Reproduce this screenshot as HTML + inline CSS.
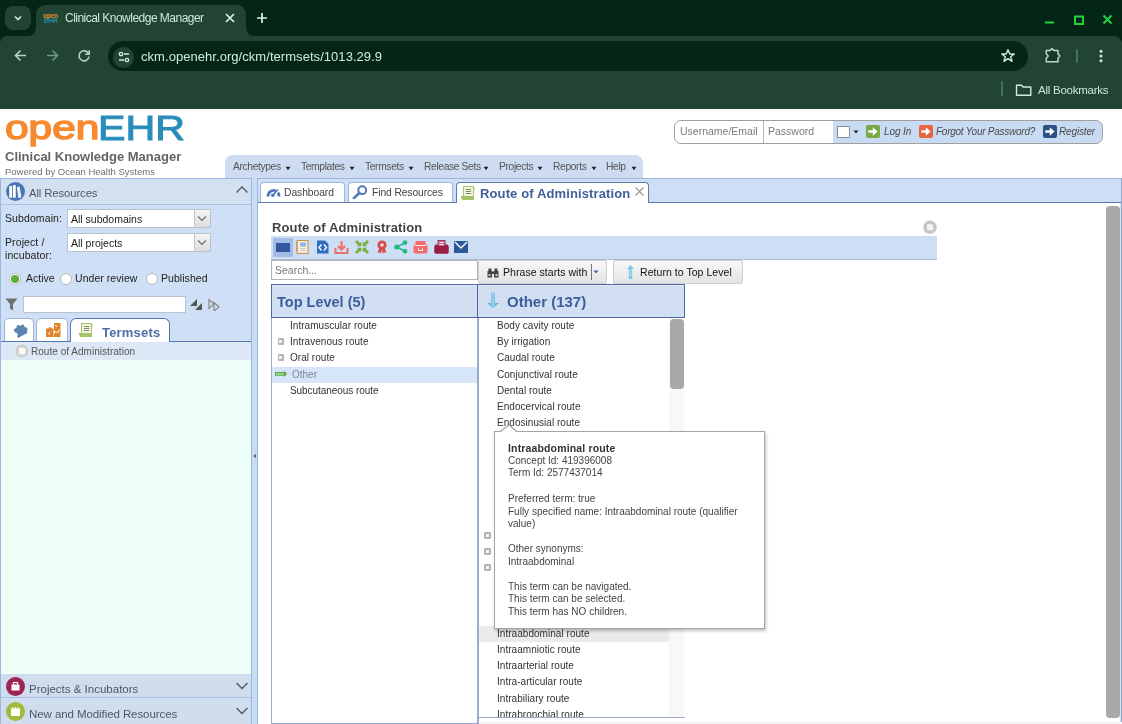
<!DOCTYPE html>
<html><head><meta charset="utf-8">
<style>
*{box-sizing:border-box;margin:0;padding:0}
html,body{width:1122px;height:724px;overflow:hidden;background:#fff;font-family:"Liberation Sans",sans-serif;position:relative}
.a{position:absolute}
.t{white-space:nowrap;will-change:transform}
#tabbar{left:0;top:0;width:1122px;height:60px;background:#042616}
#toolbar{left:0;top:36px;width:1122px;height:73px;background:#214433;border-radius:7px 8px 0 0}
#tab{left:36px;top:5px;width:210px;height:31px;background:#214433;border-radius:9px 9px 0 0}
#omni{left:108px;top:41px;width:920px;height:30px;border-radius:15px;background:#042616}
.ct{color:#cfe6d6;font-size:12.5px;white-space:nowrap;will-change:transform}
</style></head><body>
<div id="tabbar" class="a"></div>
<div id="tab" class="a"></div>
<div class="a" style="left:28px;top:28px;width:8px;height:8px;background:#214433"></div>
<div class="a" style="left:20px;top:20px;width:16px;height:16px;border-radius:0 0 8px 0;background:#042616;left:20px"></div>
<div class="a" style="left:246px;top:28px;width:8px;height:8px;background:#214433"></div>
<div class="a" style="left:246px;top:20px;width:16px;height:16px;border-radius:0 0 0 8px;background:#042616"></div>
<div class="a" style="left:5px;top:6px;width:26px;height:24px;border-radius:8px;background:#214433"></div>
<svg class="a" style="left:13px;top:13px" width="10" height="10" viewBox="0 0 10 10"><path d="M2 3.5 L5 6.5 L8 3.5" stroke="#d6eadb" stroke-width="1.6" fill="none"/></svg>
<div class="a" style="left:43px;top:11.5px;font:bold 6.5px 'Liberation Sans';color:#d8902e;letter-spacing:-0.2px">open</div>
<div class="a" style="left:44px;top:17px;font:bold 6.5px 'Liberation Sans';color:#2a8aa8;letter-spacing:0px">EHR</div>
<div class="a ct" style="left:65px;top:11px;font-size:12px;letter-spacing:-0.52px">Clinical Knowledge Manager</div>
<svg class="a" style="left:224px;top:12px" width="12" height="12" viewBox="0 0 12 12"><path d="M2 2L10 10M10 2L2 10" stroke="#e3f0e6" stroke-width="1.7"/></svg>
<svg class="a" style="left:256px;top:12px" width="12" height="12" viewBox="0 0 12 12"><path d="M6 1V11M1 6H11" stroke="#e3f0e6" stroke-width="1.7"/></svg>
<svg class="a" style="left:1040px;top:10px" width="80" height="18" viewBox="0 0 80 18">
<path d="M5 12.5H14" stroke="#22d13c" stroke-width="2"/>
<rect x="35" y="6.5" width="8" height="7.5" stroke="#22d13c" stroke-width="2" fill="none"/>
<path d="M63.5 5.5L71.5 13.5M71.5 5.5L63.5 13.5" stroke="#22d13c" stroke-width="2"/>
</svg>
<div id="toolbar" class="a"></div>
<div id="omni" class="a"></div>
<svg class="a" style="left:14px;top:49px" width="13" height="13" viewBox="0 0 13 13"><path d="M12 6.5H2M6.5 1.5L1.5 6.5L6.5 11.5" stroke="#b9d6c2" stroke-width="1.6" fill="none"/></svg>
<svg class="a" style="left:46px;top:49px" width="13" height="13" viewBox="0 0 13 13"><path d="M1 6.5H11M6.5 1.5L11.5 6.5L6.5 11.5" stroke="#6f9a7e" stroke-width="1.6" fill="none"/></svg>
<svg class="a" style="left:77px;top:49px" width="14" height="14" viewBox="0 0 14 14"><path d="M11.3 4.2A5 5 0 1 0 12 7.5" stroke="#b9d6c2" stroke-width="1.6" fill="none"/><path d="M12.2 1.2V5.2H8.2" stroke="#b9d6c2" stroke-width="1.6" fill="none"/></svg>
<div class="a" style="left:113px;top:46.5px;width:21px;height:21px;border-radius:50%;background:#214433"></div>
<svg class="a" style="left:116.5px;top:50px" width="14" height="14" viewBox="0 0 14 14"><circle cx="4" cy="4" r="1.7" stroke="#d6eadb" stroke-width="1.3" fill="none"/><path d="M7 4H12" stroke="#d6eadb" stroke-width="1.5"/><circle cx="10" cy="10" r="1.7" stroke="#d6eadb" stroke-width="1.3" fill="none"/><path d="M2 10H7" stroke="#d6eadb" stroke-width="1.5"/></svg>
<div class="a ct" style="left:141px;top:48.8px;font-size:13px;letter-spacing:0.05px;color:#d6ead9">ckm.openehr.org/ckm/termsets/1013.29.9</div>
<svg class="a" style="left:1000px;top:48px" width="16" height="16" viewBox="0 0 16 16"><path d="M8 1.8L9.8 6H14.2L10.7 8.8L12 13.3L8 10.6L4 13.3L5.3 8.8L1.8 6H6.2Z" stroke="#d6eadb" stroke-width="1.4" fill="none" stroke-linejoin="round"/></svg>
<svg class="a" style="left:1044px;top:47px" width="18" height="17" viewBox="0 0 18 17"><path d="M2.3 3.6H5.8L8 1.6L10.2 3.6H14V6.8L15.8 9L14 11.2V14.8H2.3V11.2L4.2 9L2.3 6.8Z" stroke="#b9dcc4" stroke-width="1.5" fill="#173a28" stroke-linejoin="round"/></svg>
<div class="a" style="left:1076px;top:49px;width:1.5px;height:14px;background:#46705a"></div>
<svg class="a" style="left:1097px;top:49px" width="8" height="14" viewBox="0 0 8 14"><circle cx="4" cy="2.2" r="1.5" fill="#d6eadb"/><circle cx="4" cy="7" r="1.5" fill="#d6eadb"/><circle cx="4" cy="11.8" r="1.5" fill="#d6eadb"/></svg>
<div class="a" style="left:1001px;top:81px;width:1.5px;height:15px;background:#46705a"></div>
<svg class="a" style="left:1015px;top:83px" width="18" height="14" viewBox="0 0 18 14"><path d="M1.5 2.2H6.5L8.2 4H15.8V12.3H1.5Z" stroke="#d6eadb" stroke-width="1.4" fill="none" stroke-linejoin="round"/></svg>
<div class="a ct" style="left:1038px;top:84px;font-size:11.5px;letter-spacing:-0.25px">All Bookmarks</div>

<div class="a" style="left:0px;top:109px;width:1122px;height:615px;background:#fff;"></div>
<div class="a t" style="left:4.5px;top:111.27px;font-size:33px;line-height:33px;color:#f7892f;font-weight:normal;font-style:normal;transform:scaleX(1.285);transform-origin:0 0;-webkit-text-stroke:1.4px #f7892f">open</div>
<div class="a t" style="left:97.5px;top:110.75px;font-size:35.5px;line-height:35.5px;color:#2a8cba;font-weight:normal;font-style:normal;transform:scaleX(1.16);transform-origin:0 0;-webkit-text-stroke:1px #2a8cba">EHR</div>
<div class="a t" style="left:5px;top:150.00px;font-size:13px;line-height:13px;color:#646464;font-weight:bold;font-style:normal;">Clinical Knowledge Manager</div>
<div class="a t" style="left:5px;top:166.96px;font-size:9.5px;line-height:9.5px;color:#707070;font-weight:normal;font-style:normal;">Powered by Ocean Health Systems</div>
<div class="a" style="left:674px;top:120px;width:429px;height:24px;background:#c9dbf2;border:1px solid #a0a0a0;border-radius:7px"></div>
<div class="a" style="left:675px;top:121px;width:158px;height:22px;background:#fff;border-radius:6px 0 0 6px"></div>
<div class="a" style="left:763px;top:121px;width:1px;height:22px;background:#b5b5b5;"></div>
<div class="a t" style="left:680px;top:126.11px;font-size:10.5px;line-height:10.5px;color:#7a7a7a;font-weight:normal;font-style:normal;">Username/Email</div>
<div class="a t" style="left:768px;top:126.11px;font-size:10.5px;line-height:10.5px;color:#7a7a7a;font-weight:normal;font-style:normal;">Password</div>
<div class="a" style="left:837px;top:126px;width:13px;height:12px;background:#fff;border:1px solid #8e8e8e"></div>
<svg class="a" style="left:853px;top:129px" width="6" height="6" viewBox="0 0 6 6"><path d="M0.5 1.5H5.5L3 4.5Z" fill="#222"/></svg>
<div class="a" style="left:866px;top:125px;width:14px;height:13px;background:#79a947;border-radius:2px"></div>
<svg class="a" style="left:866px;top:125px" width="14" height="13" viewBox="0 0 14 13"><path d="M2.3 5.2H6.8V2.3L11.6 6.5L6.8 10.7V7.8H2.3Z" fill="#fff"/></svg>
<div class="a t" style="left:883.5px;top:126.53px;font-size:10px;line-height:10px;color:#4a4a4a;font-weight:normal;font-style:italic;letter-spacing:-0.1px">Log In</div>
<div class="a" style="left:919px;top:125px;width:14px;height:13px;background:#e8643c;border-radius:2px"></div>
<svg class="a" style="left:919px;top:125px" width="14" height="13" viewBox="0 0 14 13"><path d="M2.3 5.2H6.8V2.3L11.6 6.5L6.8 10.7V7.8H2.3Z" fill="#fff"/></svg>
<div class="a t" style="left:936px;top:126.53px;font-size:10px;line-height:10px;color:#4a4a4a;font-weight:normal;font-style:italic;letter-spacing:-0.25px">Forgot Your Password?</div>
<div class="a" style="left:1043px;top:125px;width:14px;height:13px;background:#2d4f82;border-radius:2px"></div>
<svg class="a" style="left:1043px;top:125px" width="14" height="13" viewBox="0 0 14 13"><path d="M2.3 5.2H6.8V2.3L11.6 6.5L6.8 10.7V7.8H2.3Z" fill="#fff"/></svg>
<div class="a t" style="left:1059px;top:126.53px;font-size:10px;line-height:10px;color:#4a4a4a;font-weight:normal;font-style:italic;letter-spacing:-0.15px">Register</div>
<div class="a" style="left:225px;top:155px;width:418px;height:30px;background:#cddcf1;border-radius:8px 8px 0 0"></div>
<div class="a t" style="left:233px;top:162.08px;font-size:10.3px;line-height:10.3px;color:#555;font-weight:normal;font-style:normal;letter-spacing:-0.38px">Archetypes</div>
<svg class="a" style="left:285px;top:166px" width="6" height="5" viewBox="0 0 6 5"><path d="M0.6 0.8H5.4L3 4.2Z" fill="#222"/></svg>
<div class="a t" style="left:301px;top:162.08px;font-size:10.3px;line-height:10.3px;color:#555;font-weight:normal;font-style:normal;letter-spacing:-0.38px">Templates</div>
<svg class="a" style="left:349px;top:166px" width="6" height="5" viewBox="0 0 6 5"><path d="M0.6 0.8H5.4L3 4.2Z" fill="#222"/></svg>
<div class="a t" style="left:365px;top:162.08px;font-size:10.3px;line-height:10.3px;color:#555;font-weight:normal;font-style:normal;letter-spacing:-0.38px">Termsets</div>
<svg class="a" style="left:408px;top:166px" width="6" height="5" viewBox="0 0 6 5"><path d="M0.6 0.8H5.4L3 4.2Z" fill="#222"/></svg>
<div class="a t" style="left:424px;top:162.08px;font-size:10.3px;line-height:10.3px;color:#555;font-weight:normal;font-style:normal;letter-spacing:-0.38px">Release Sets</div>
<svg class="a" style="left:483px;top:166px" width="6" height="5" viewBox="0 0 6 5"><path d="M0.6 0.8H5.4L3 4.2Z" fill="#222"/></svg>
<div class="a t" style="left:498.5px;top:162.08px;font-size:10.3px;line-height:10.3px;color:#555;font-weight:normal;font-style:normal;letter-spacing:-0.38px">Projects</div>
<svg class="a" style="left:537px;top:166px" width="6" height="5" viewBox="0 0 6 5"><path d="M0.6 0.8H5.4L3 4.2Z" fill="#222"/></svg>
<div class="a t" style="left:553px;top:162.08px;font-size:10.3px;line-height:10.3px;color:#555;font-weight:normal;font-style:normal;letter-spacing:-0.38px">Reports</div>
<svg class="a" style="left:591px;top:166px" width="6" height="5" viewBox="0 0 6 5"><path d="M0.6 0.8H5.4L3 4.2Z" fill="#222"/></svg>
<div class="a t" style="left:606px;top:162.08px;font-size:10.3px;line-height:10.3px;color:#555;font-weight:normal;font-style:normal;letter-spacing:-0.38px">Help</div>
<svg class="a" style="left:631px;top:166px" width="6" height="5" viewBox="0 0 6 5"><path d="M0.6 0.8H5.4L3 4.2Z" fill="#222"/></svg>
<div class="a" style="left:0px;top:178px;width:252px;height:546px;background:#cfdff5;border:1px solid #99b7df"></div>
<div class="a" style="left:1px;top:179px;width:250px;height:25px;background:#d3e0f1;"></div>
<div class="a" style="left:1px;top:204px;width:250px;height:1px;background:#a7c0e3;"></div>
<svg class="a" style="left:5px;top:181px" width="21" height="21" viewBox="0 0 21 21"><circle cx="10.5" cy="10.5" r="9.5" fill="#4a77b6"/><rect x="4" y="4.8" width="3.3" height="12.2" fill="#fff" stroke="#3d66a3" stroke-width="0.5"/><rect x="7.7" y="3.9" width="3.3" height="13.1" fill="#fff" stroke="#3d66a3" stroke-width="0.5"/><path d="M11.8 6.2L14.6 5.6L16.4 16.6L13.4 17Z" fill="#eef3fb"/></svg>
<div class="a t" style="left:29.2px;top:188.43px;font-size:11.3px;line-height:11.3px;color:#4c5866;font-weight:normal;font-style:normal;letter-spacing:-0.1px">All Resources</div>
<svg class="a" style="left:235px;top:185px" width="14" height="9" viewBox="0 0 14 9"><path d="M1.5 7.5L7 2L12.5 7.5" stroke="#4c5866" stroke-width="1.3" fill="none"/></svg>
<div class="a t" style="left:4.6px;top:212.61px;font-size:10.5px;line-height:10.5px;color:#222;font-weight:normal;font-style:normal;letter-spacing:0.1px">Subdomain:</div>
<div class="a t" style="left:4.6px;top:236.61px;font-size:10.5px;line-height:10.5px;color:#222;font-weight:normal;font-style:normal;letter-spacing:0.1px">Project /</div>
<div class="a t" style="left:4.6px;top:250.11px;font-size:10.5px;line-height:10.5px;color:#222;font-weight:normal;font-style:normal;letter-spacing:0.1px">incubator:</div>
<div class="a" style="left:67px;top:209px;width:144px;height:19px;background:#fff;border:1px solid #b9c3cf"></div>
<div class="a" style="left:194px;top:210px;width:16px;height:17px;background:linear-gradient(#f4f4f4,#dedede);border-left:1px solid #c7c7c7"></div>
<svg class="a" style="left:196px;top:215px" width="12" height="8" viewBox="0 0 12 8"><path d="M2 1.5L6 5.5L10 1.5" stroke="#666" stroke-width="1.1" fill="none"/></svg>
<div class="a t" style="left:71px;top:213.71px;font-size:10.5px;line-height:10.5px;color:#222;font-weight:normal;font-style:normal;">All subdomains</div>
<div class="a" style="left:67px;top:233px;width:144px;height:19px;background:#fff;border:1px solid #b9c3cf"></div>
<div class="a" style="left:194px;top:234px;width:16px;height:17px;background:linear-gradient(#f4f4f4,#dedede);border-left:1px solid #c7c7c7"></div>
<svg class="a" style="left:196px;top:239px" width="12" height="8" viewBox="0 0 12 8"><path d="M2 1.5L6 5.5L10 1.5" stroke="#666" stroke-width="1.1" fill="none"/></svg>
<div class="a t" style="left:71px;top:237.71px;font-size:10.5px;line-height:10.5px;color:#222;font-weight:normal;font-style:normal;">All projects</div>
<div class="a" style="left:8.5px;top:272.5px;width:12px;height:12px;border-radius:50%;background:#fff;border:1px solid #b9b9b9"></div>
<div class="a" style="left:10.5px;top:274.5px;width:8px;height:8px;border-radius:50%;background:#5aad3f"></div>
<div class="a t" style="left:26px;top:273.11px;font-size:10.5px;line-height:10.5px;color:#222;font-weight:normal;font-style:normal;">Active</div>
<div class="a" style="left:59.5px;top:272.5px;width:12px;height:12px;border-radius:50%;background:#fff;border:1px solid #b9b9b9"></div>
<div class="a t" style="left:75.2px;top:273.11px;font-size:10.5px;line-height:10.5px;color:#222;font-weight:normal;font-style:normal;letter-spacing:0.05px">Under review</div>
<div class="a" style="left:145.5px;top:272.5px;width:12px;height:12px;border-radius:50%;background:#fff;border:1px solid #b9b9b9"></div>
<div class="a t" style="left:161.2px;top:273.11px;font-size:10.5px;line-height:10.5px;color:#222;font-weight:normal;font-style:normal;letter-spacing:0.05px">Published</div>
<svg class="a" style="left:5px;top:298px" width="13" height="13" viewBox="0 0 13 13"><path d="M0.5 0.5H12.5L8 6V12.5L5 10.5V6Z" fill="#707070"/></svg>
<div class="a" style="left:23px;top:296px;width:163px;height:17px;background:#fff;border:1px solid #b9c3cf"></div>
<svg class="a" style="left:189px;top:298px" width="14" height="13" viewBox="0 0 14 13"><path d="M8 1L1 8H8Z" fill="#555"/><path d="M13 5L6 12H13Z" fill="#555"/></svg>
<svg class="a" style="left:208px;top:298px" width="14" height="13" viewBox="0 0 14 13"><path d="M1 1.5L6 6L1 10.5Z" stroke="#888" stroke-width="1.2" fill="none"/><path d="M6 4.5L11 9L6 13Z" stroke="#888" stroke-width="1.2" fill="none"/></svg>
<div class="a" style="left:1px;top:341px;width:250px;height:1px;background:#5478b5;"></div>
<div class="a" style="left:4px;top:318px;width:30px;height:23px;background:#fff;border:1px solid #a2b3d0;border-bottom:none;border-radius:5px 5px 0 0"></div>
<div class="a" style="left:36px;top:318px;width:32px;height:23px;background:#fff;border:1px solid #a2b3d0;border-bottom:none;border-radius:5px 5px 0 0"></div>
<div class="a" style="left:70px;top:318px;width:100px;height:24px;background:#fff;border:1px solid #5478b5;border-bottom:none;border-radius:6px 6px 0 0"></div>
<svg class="a" style="left:11px;top:321px" width="18" height="18" viewBox="0 0 18 18"><g transform="rotate(-28 9 9)"><path d="M3.5 5.5H7.2C6.6 3.2 11.4 3.2 10.8 5.5H14.5V9.2C16.8 8.6 16.8 13.4 14.5 12.8V15H3.5V12.8C5.5 13.4 5.5 8.6 3.5 9.2Z" fill="#5b84b1"/></g></svg>
<svg class="a" style="left:45px;top:322px" width="17" height="16" viewBox="0 0 17 16"><path d="M1 6.5H3.5A1.5 1.5 0 0 1 6.5 6.5H8.5V15H1Z" fill="#e08529"/><path d="M9 1H15.5V15H9V11.5A1.5 1.5 0 0 0 9 8.5Z" fill="#e08529"/><path d="M5 13L3.5 11.5L5 10M11 9.5L12.5 11L14.5 7.5" stroke="#fff" stroke-width="1" fill="none"/><path d="M10.5 3L12 5" stroke="#fff" stroke-width="1"/></svg>
<svg class="a" style="left:79px;top:323px" width="15" height="15" viewBox="0 0 15 15"><rect x="2.5" y="0.5" width="10" height="11" fill="#f3f8e2" stroke="#a9c274" stroke-width="1.1"/><path d="M12.5 0.5L14.3 3H12.5Z" fill="#a9c274"/><path d="M4.8 3.5H10.2M4.8 5.5H10.2M4.8 7.5H10.2" stroke="#6f7f55" stroke-width="0.9"/><path d="M0 10H12.8V14H1.5L0 11.5Z" fill="#a3c468"/></svg>
<div class="a t" style="left:101.8px;top:325.70px;font-size:13px;line-height:13px;color:#4a6ea8;font-weight:bold;font-style:normal;letter-spacing:0.2px">Termsets</div>
<div class="a" style="left:1px;top:342px;width:250px;height:18px;background:#dde8f7;"></div>
<div class="a" style="left:1px;top:360px;width:250px;height:314px;background:#eefff7;"></div>
<svg class="a" style="left:15px;top:344px" width="14" height="14" viewBox="0 0 14 14"><circle cx="7" cy="7" r="6.6" fill="#d0d0d0"/><rect x="3.8" y="3.8" width="6.4" height="6.4" rx="1" fill="#fafafa"/></svg>
<div class="a t" style="left:30.8px;top:346.84px;font-size:10px;line-height:10px;color:#555;font-weight:normal;font-style:normal;letter-spacing:0.03px">Route of Administration</div>
<div class="a" style="left:1px;top:674px;width:250px;height:24px;background:#d0ddee;"></div>
<div class="a" style="left:1px;top:697px;width:250px;height:1px;background:#a7c0e3;"></div>
<div class="a" style="left:1px;top:698px;width:250px;height:26px;background:#d0ddee;"></div>
<div class="a" style="left:6px;top:677px;width:19px;height:19px;border-radius:50%;background:#9c2553"></div>
<svg class="a" style="left:9px;top:680px" width="13" height="13" viewBox="0 0 13 13"><rect x="2.5" y="4.5" width="8" height="6" fill="#fff"/><path d="M4.5 4.5V2.5H8.5V4.5" stroke="#fff" stroke-width="1.2" fill="none"/></svg>
<div class="a t" style="left:29.3px;top:683.77px;font-size:11.5px;line-height:11.5px;color:#4c5866;font-weight:normal;font-style:normal;">Projects &amp; Incubators</div>
<svg class="a" style="left:235px;top:682px" width="14" height="8" viewBox="0 0 14 8"><path d="M1.5 1L7 6.5L12.5 1" stroke="#4c5866" stroke-width="1.3" fill="none"/></svg>
<div class="a" style="left:6px;top:702px;width:19px;height:19px;border-radius:50%;background:#9fbb3b"></div>
<svg class="a" style="left:9px;top:705px" width="13" height="13" viewBox="0 0 13 13"><rect x="2" y="3.5" width="9" height="7.5" fill="#fff"/><path d="M4 2V4M6.5 2V4M9 2V4" stroke="#fff" stroke-width="1"/></svg>
<div class="a t" style="left:29.3px;top:708.57px;font-size:11.5px;line-height:11.5px;color:#4c5866;font-weight:normal;font-style:normal;letter-spacing:-0.08px">New and Modified Resources</div>
<svg class="a" style="left:235px;top:707px" width="14" height="8" viewBox="0 0 14 8"><path d="M1.5 1L7 6.5L12.5 1" stroke="#4c5866" stroke-width="1.3" fill="none"/></svg>
<div class="a" style="left:252px;top:178px;width:6px;height:546px;background:#cadcf3;"></div>
<div class="a" style="left:257px;top:178px;width:1px;height:546px;background:#99b7df;"></div>
<svg class="a" style="left:252px;top:453px" width="5" height="6" viewBox="0 0 5 6"><path d="M4 0.5V5.5L1 3Z" fill="#777"/></svg>
<div class="a" style="left:258px;top:178px;width:864px;height:25px;background:#cedff5;"></div>
<div class="a" style="left:258px;top:178px;width:864px;height:1px;background:#99b7df;"></div>
<div class="a" style="left:258px;top:202px;width:864px;height:1px;background:#5a7bab;"></div>
<div class="a" style="left:1120px;top:203px;width:1px;height:521px;background:#d5e0f0;"></div>
<div class="a" style="left:1121px;top:178px;width:1px;height:546px;background:#8fa9cf;"></div>
<div class="a" style="left:260px;top:182px;width:85px;height:20px;background:#fff;border:1px solid #99b7df;border-bottom:none;border-radius:4px 4px 0 0"></div>
<div class="a" style="left:348px;top:182px;width:105px;height:20px;background:#fff;border:1px solid #99b7df;border-bottom:none;border-radius:4px 4px 0 0"></div>
<div class="a" style="left:456px;top:182px;width:193px;height:21px;background:#fff;border:1px solid #5a7bab;border-bottom:none;border-radius:4px 4px 0 0"></div>
<svg class="a" style="left:266px;top:187px" width="15" height="10" viewBox="0 0 15 10"><path d="M2 9.5A5.8 5.8 0 0 1 9.5 3.7" stroke="#4d78b8" stroke-width="2.8" fill="none"/><path d="M12 5.6A5.8 5.8 0 0 1 13 9.5" stroke="#4d78b8" stroke-width="2.8" fill="none"/><path d="M7 8L11.8 2.6" stroke="#4d78b8" stroke-width="1.7"/><circle cx="6.8" cy="8.2" r="1.8" fill="#4d78b8"/></svg>
<div class="a t" style="left:284px;top:187.58px;font-size:10.3px;line-height:10.3px;color:#444;font-weight:normal;font-style:normal;letter-spacing:-0.05px">Dashboard</div>
<svg class="a" style="left:352px;top:185px" width="16" height="14" viewBox="0 0 16 14"><circle cx="10.2" cy="5.2" r="3.9" stroke="#5079b6" stroke-width="2" fill="none"/><path d="M7.4 8L2 13" stroke="#5079b6" stroke-width="2.6" stroke-linecap="round"/></svg>
<div class="a t" style="left:372px;top:187.58px;font-size:10.3px;line-height:10.3px;color:#444;font-weight:normal;font-style:normal;letter-spacing:-0.1px">Find Resources</div>
<svg class="a" style="left:460.5px;top:185.5px" width="15" height="15" viewBox="0 0 15 15"><rect x="2.5" y="0.5" width="10" height="11" fill="#f3f8e2" stroke="#a9c274" stroke-width="1.1"/><path d="M12.5 0.5L14.3 3H12.5Z" fill="#a9c274"/><path d="M4.8 3.5H10.2M4.8 5.5H10.2M4.8 7.5H10.2" stroke="#6f7f55" stroke-width="0.9"/><path d="M0 10H12.8V14H1.5L0 11.5Z" fill="#a3c468"/></svg>
<div class="a t" style="left:480px;top:186.80px;font-size:13px;line-height:13px;color:#3e5f99;font-weight:bold;font-style:normal;letter-spacing:0.12px">Route of Administration</div>
<svg class="a" style="left:635px;top:187px" width="9" height="9" viewBox="0 0 9 9"><path d="M0.5 0.5L8.5 8.5M8.5 0.5L0.5 8.5" stroke="#999" stroke-width="1.1"/></svg>
<div class="a" style="left:1106px;top:206px;width:14px;height:512px;background:#a8a8a8;border-radius:4px"></div>
<div class="a t" style="left:271.5px;top:220.80px;font-size:13px;line-height:13px;color:#444;font-weight:bold;font-style:normal;letter-spacing:0.12px">Route of Administration</div>
<svg class="a" style="left:923px;top:220px" width="14" height="15" viewBox="0 0 14 15"><circle cx="7" cy="7.3" r="6.8" fill="#c6c6c6"/><rect x="4" y="4.3" width="6" height="6" rx="1" fill="#f5f5f5"/></svg>
<div class="a" style="left:271px;top:236px;width:666px;height:23px;background:#cedff5;"></div>
<div class="a" style="left:271px;top:259px;width:666px;height:1px;background:#a9bbd4;"></div>
<div class="a" style="left:273px;top:238px;width:20px;height:19px;background:#a3bce6;"></div>
<div class="a" style="left:276px;top:243px;width:14px;height:9px;background:#3556a0;"></div>
<svg class="a" style="left:296px;top:240px" width="13" height="14" viewBox="0 0 13 14"><rect x="1" y="0.5" width="11" height="13" fill="#f6efe0" stroke="#c98c4a" stroke-width="1"/><rect x="4" y="2.5" width="6" height="4" fill="#8fb5e0"/><path d="M1 2V12" stroke="#c98c4a" stroke-width="2" stroke-dasharray="1 1"/><path d="M4.5 8.5H9.5M4.5 10.5H9.5" stroke="#bbb" stroke-width="0.8"/></svg>
<svg class="a" style="left:316px;top:240px" width="13" height="14" viewBox="0 0 13 14"><path d="M1 0.5H9L12.5 4V13.5H1Z" fill="#2f6fc0"/><path d="M5.5 4.5L3 7.5L5.5 10.5M8 4.5L10.5 7.5L8 10.5" stroke="#fff" stroke-width="1.3" fill="none"/></svg>
<svg class="a" style="left:334px;top:240px" width="15" height="14" viewBox="0 0 15 14"><path d="M7.5 1V9M4 6L7.5 9.5L11 6" stroke="#ee6f6a" stroke-width="2.2" fill="none"/><path d="M1.5 8V13H13.5V8" stroke="#ee6f6a" stroke-width="2" fill="none"/></svg>
<svg class="a" style="left:355px;top:240px" width="14" height="14" viewBox="0 0 14 14"><g stroke="#74b03a" stroke-width="2.8"><path d="M1 1L4.5 4.5M13 1L9.5 4.5M1 13L4.5 9.5M13 13L9.5 9.5"/></g><g fill="#74b03a"><path d="M6.3 6.3V1.8L1.8 6.3Z"/><path d="M7.7 6.3V1.8L12.2 6.3Z"/><path d="M6.3 7.7V12.2L1.8 7.7Z"/><path d="M7.7 7.7V12.2L12.2 7.7Z"/></g></svg>
<svg class="a" style="left:376px;top:240px" width="12" height="14" viewBox="0 0 12 14"><path d="M3.5 7.5L1.5 13L3.8 12.2L5 14L6 9M8.5 7.5L10.5 13L8.2 12.2L7 14L6 9" fill="#d44a4a"/><circle cx="6" cy="5" r="4.6" fill="#d44a4a"/><circle cx="6" cy="5" r="1.8" fill="#f2dede"/></svg>
<svg class="a" style="left:394px;top:240px" width="14" height="14" viewBox="0 0 14 14"><circle cx="11" cy="2.7" r="2.4" fill="#22b98a"/><circle cx="2.8" cy="7" r="2.6" fill="#22b98a"/><circle cx="11" cy="11.3" r="2.4" fill="#22b98a"/><path d="M11 2.7L2.8 7L11 11.3" stroke="#22b98a" stroke-width="1.6" fill="none"/></svg>
<svg class="a" style="left:413px;top:240px" width="15" height="14" viewBox="0 0 15 14"><rect x="0.5" y="4" width="14" height="9.5" rx="2.5" fill="#f26d6d"/><rect x="2.5" y="1" width="10" height="4" rx="1" fill="#f26d6d"/><path d="M1.5 5.5H13.5" stroke="#fff" stroke-width="0.8"/><path d="M5.5 8.5V10.5H9.5V8.5" stroke="#fff" stroke-width="1" fill="none"/></svg>
<svg class="a" style="left:434px;top:240px" width="15" height="14" viewBox="0 0 15 14"><rect x="0.5" y="4.5" width="14" height="9" rx="1.5" fill="#9a1d45"/><rect x="4" y="0.5" width="7" height="7" fill="#c87090" stroke="#9a1d45" stroke-width="0.8"/><path d="M5.5 2.5H9.5M5.5 4.5H9.5" stroke="#fff" stroke-width="0.8"/><rect x="0.5" y="6" width="14" height="7.5" rx="1.5" fill="#9a1d45"/></svg>
<svg class="a" style="left:454px;top:241px" width="14" height="12" viewBox="0 0 14 12"><rect x="0" y="0" width="14" height="12" fill="#2d5795"/><path d="M1 1L7 7L13 1" stroke="#fff" stroke-width="1.4" fill="none"/></svg>
<div class="a" style="left:271px;top:260px;width:207px;height:20px;background:#fff;border:1px solid #b5b5b5"></div>
<div class="a t" style="left:275px;top:264.61px;font-size:10.5px;line-height:10.5px;color:#777;font-weight:normal;font-style:normal;">Search...</div>
<div class="a" style="left:478px;top:260px;width:129px;height:24px;background:linear-gradient(#f8f8f8,#e3e3e3);border:1px solid #d0d0d0;border-radius:2px"></div>
<svg class="a" style="left:487px;top:268px" width="12" height="10" viewBox="0 0 12 10"><rect x="0.5" y="3" width="4.5" height="6.5" fill="#444"/><rect x="7" y="3" width="4.5" height="6.5" fill="#444"/><rect x="1.5" y="0.5" width="3" height="3" fill="#444"/><rect x="7.5" y="0.5" width="3" height="3" fill="#444"/><rect x="4.5" y="3.5" width="3" height="2.5" fill="#444"/><rect x="1.5" y="6" width="2" height="2" fill="#ccc"/><rect x="8.5" y="6" width="2" height="2" fill="#ccc"/></svg>
<div class="a t" style="left:502.5px;top:266.71px;font-size:10.5px;line-height:10.5px;color:#111;font-weight:normal;font-style:normal;letter-spacing:0.05px">Phrase starts with</div>
<div class="a" style="left:591px;top:264px;width:1px;height:16px;background:#777;"></div>
<svg class="a" style="left:593px;top:270px" width="6" height="4" viewBox="0 0 6 4"><path d="M0.5 0.5H5.5L3 3.5Z" fill="#3a66a8"/></svg>
<div class="a" style="left:613px;top:260px;width:130px;height:24px;background:linear-gradient(#f8f8f8,#e3e3e3);border:1px solid #d0d0d0;border-radius:2px"></div>
<svg class="a" style="left:626px;top:264px" width="9" height="16" viewBox="0 0 9 16"><path d="M4.5 1L8 5H6.2V15H2.8V5H1Z" fill="#7cc6e6"/><path d="M3.8 6.5H5.2M3.8 9H5.2M3.8 11.5H5.2" stroke="#e6f6fc" stroke-width="1"/></svg>
<div class="a t" style="left:640px;top:266.71px;font-size:10.5px;line-height:10.5px;color:#111;font-weight:normal;font-style:normal;letter-spacing:0.05px">Return to Top Level</div>
<div class="a" style="left:271px;top:284px;width:207px;height:440px;background:#fff;border:1px solid #9aaccc;border-top:none"></div>
<div class="a" style="left:271px;top:284px;width:207px;height:34px;background:#d2dff2;border:1px solid #4d66a8"></div>
<div class="a" style="left:272px;top:285px;width:205px;height:1px;background:#e2ecfa;"></div>
<div class="a t" style="left:277px;top:294.73px;font-size:14.5px;line-height:14.5px;color:#3a5f9a;font-weight:bold;font-style:normal;">Top Level (5)</div>
<div class="a" style="left:477px;top:284px;width:208px;height:34px;background:#d2dff2;border:1px solid #4d66a8"></div>
<div class="a" style="left:479px;top:285px;width:205px;height:1px;background:#e2ecfa;"></div>
<div class="a" style="left:477px;top:318px;width:2px;height:406px;background:#9aaccc;"></div>
<svg class="a" style="left:487px;top:292px" width="12" height="17" viewBox="0 0 12 17"><defs><linearGradient id="ag" x1="0" x2="1"><stop offset="0" stop-color="#3f9cc6"/><stop offset="0.5" stop-color="#9ad6ee"/><stop offset="1" stop-color="#3590bd"/></linearGradient></defs><path d="M4 0.5H8V11H11.5L6 16.5L0.5 11H4Z" fill="url(#ag)"/></svg>
<div class="a t" style="left:507px;top:294.30px;font-size:15px;line-height:15px;color:#3a5f9a;font-weight:bold;font-style:normal;">Other (137)</div>
<div class="a t" style="left:289.8px;top:321.04px;font-size:10px;line-height:10px;color:#333;font-weight:normal;font-style:normal;letter-spacing:0.04px">Intramuscular route</div>
<div class="a t" style="left:289.8px;top:337.04px;font-size:10px;line-height:10px;color:#333;font-weight:normal;font-style:normal;letter-spacing:0.04px">Intravenous route</div>
<div class="a" style="left:277.5px;top:338px;width:6.5px;height:6.5px;background:#b4b4b4;border-radius:1px"></div>
<div class="a" style="left:279.25px;top:339.75px;width:3px;height:3px;background:#f2f2f2;"></div>
<div class="a t" style="left:289.8px;top:353.04px;font-size:10px;line-height:10px;color:#333;font-weight:normal;font-style:normal;letter-spacing:0.04px">Oral route</div>
<div class="a" style="left:277.5px;top:354px;width:6.5px;height:6.5px;background:#b4b4b4;border-radius:1px"></div>
<div class="a" style="left:279.25px;top:355.75px;width:3px;height:3px;background:#f2f2f2;"></div>
<div class="a" style="left:272px;top:367px;width:205px;height:16px;background:#d7e5f8;"></div>
<svg class="a" style="left:275px;top:370px" width="13" height="8" viewBox="0 0 13 8"><path d="M0 2H9V0.8L12.2 3.9L9 7V5.8H0Z" fill="#5aa845"/><rect x="1" y="3" width="8" height="1.8" fill="#9edb8c"/></svg>
<div class="a t" style="left:291.5px;top:369.64px;font-size:10px;line-height:10px;color:#7c8898;font-weight:normal;font-style:normal;">Other</div>
<div class="a t" style="left:289.8px;top:385.84px;font-size:10px;line-height:10px;color:#333;font-weight:normal;font-style:normal;letter-spacing:-0.06px">Subcutaneous route</div>
<div class="a t" style="left:496.8px;top:321.14px;font-size:10px;line-height:10px;color:#333;font-weight:normal;font-style:normal;letter-spacing:0.04px">Body cavity route</div>
<div class="a t" style="left:496.8px;top:337.14px;font-size:10px;line-height:10px;color:#333;font-weight:normal;font-style:normal;letter-spacing:0.04px">By irrigation</div>
<div class="a t" style="left:496.8px;top:353.14px;font-size:10px;line-height:10px;color:#333;font-weight:normal;font-style:normal;letter-spacing:0.04px">Caudal route</div>
<div class="a t" style="left:496.8px;top:369.64px;font-size:10px;line-height:10px;color:#333;font-weight:normal;font-style:normal;letter-spacing:0.04px">Conjunctival route</div>
<div class="a t" style="left:496.8px;top:386.14px;font-size:10px;line-height:10px;color:#333;font-weight:normal;font-style:normal;letter-spacing:0.04px">Dental route</div>
<div class="a t" style="left:496.8px;top:402.14px;font-size:10px;line-height:10px;color:#333;font-weight:normal;font-style:normal;letter-spacing:0.04px">Endocervical route</div>
<div class="a t" style="left:496.8px;top:418.14px;font-size:10px;line-height:10px;color:#333;font-weight:normal;font-style:normal;letter-spacing:0.04px">Endosinusial route</div>
<div class="a" style="left:669px;top:318px;width:15px;height:399px;background:#f8f8f8;"></div>
<div class="a" style="left:670px;top:319px;width:14px;height:70px;background:#a8a8a8;border-radius:4px"></div>
<div class="a" style="left:484px;top:532px;width:6.5px;height:6.5px;background:#b4b4b4;border-radius:1px"></div>
<div class="a" style="left:485.75px;top:533.75px;width:3px;height:3px;background:#f2f2f2;"></div>
<div class="a" style="left:484px;top:548px;width:6.5px;height:6.5px;background:#b4b4b4;border-radius:1px"></div>
<div class="a" style="left:485.75px;top:549.75px;width:3px;height:3px;background:#f2f2f2;"></div>
<div class="a" style="left:484px;top:564px;width:6.5px;height:6.5px;background:#b4b4b4;border-radius:1px"></div>
<div class="a" style="left:485.75px;top:565.75px;width:3px;height:3px;background:#f2f2f2;"></div>
<div class="a" style="left:479px;top:626px;width:190px;height:16px;background:#ebebeb;"></div>
<div class="a t" style="left:496.8px;top:629.34px;font-size:10px;line-height:10px;color:#333;font-weight:normal;font-style:normal;letter-spacing:0.04px">Intraabdominal route</div>
<div class="a t" style="left:496.8px;top:645.13px;font-size:10px;line-height:10px;color:#333;font-weight:normal;font-style:normal;letter-spacing:0.04px">Intraamniotic route</div>
<div class="a t" style="left:496.8px;top:660.93px;font-size:10px;line-height:10px;color:#333;font-weight:normal;font-style:normal;letter-spacing:0.04px">Intraarterial route</div>
<div class="a t" style="left:496.8px;top:676.84px;font-size:10px;line-height:10px;color:#333;font-weight:normal;font-style:normal;letter-spacing:0.04px">Intra-articular route</div>
<div class="a t" style="left:496.8px;top:694.13px;font-size:10px;line-height:10px;color:#333;font-weight:normal;font-style:normal;letter-spacing:0.04px">Intrabiliary route</div>
<div class="a t" style="left:496.8px;top:709.63px;font-size:10px;line-height:10px;color:#333;font-weight:normal;font-style:normal;letter-spacing:0.04px">Intrabronchial route</div>
<div class="a" style="left:479px;top:718px;width:206px;height:6px;background:#fff;"></div>
<div class="a" style="left:479px;top:717px;width:206px;height:1px;background:#9aaccc;"></div>
<div class="a" style="left:271px;top:723px;width:207px;height:1px;background:#9aaccc;"></div>
<div class="a" style="left:479px;top:722px;width:643px;height:2px;background:#f4f4f4;"></div>
<div class="a" style="left:494px;top:431px;width:271px;height:198px;background:#fff;border:1px solid #a6a6a6;box-shadow:1px 2px 3px rgba(0,0,0,0.25)"></div>
<svg class="a" style="left:498px;top:422px" width="22" height="11" viewBox="0 0 22 11"><path d="M2.5 9.3L11.3 3L18.3 9.3" fill="#fff" stroke="#a0a0a0" stroke-width="1.2"/><rect x="3.6" y="8.9" width="13.8" height="2.4" fill="#fff"/></svg>
<div class="a t" style="left:508px;top:442.71px;font-size:10.5px;line-height:10.5px;color:#333;font-weight:bold;font-style:normal;letter-spacing:0.15px">Intraabdominal route</div>
<div class="a t" style="left:508px;top:455.74px;font-size:10px;line-height:10px;color:#444;font-weight:normal;font-style:normal;">Concept Id: 419396008</div>
<div class="a t" style="left:508px;top:468.24px;font-size:10px;line-height:10px;color:#444;font-weight:normal;font-style:normal;">Term Id: 2577437014</div>
<div class="a t" style="left:508px;top:494.24px;font-size:10px;line-height:10px;color:#444;font-weight:normal;font-style:normal;">Preferred term: true</div>
<div class="a t" style="left:508px;top:506.74px;font-size:10px;line-height:10px;color:#444;font-weight:normal;font-style:normal;">Fully specified name: Intraabdominal route (qualifier</div>
<div class="a t" style="left:508px;top:519.24px;font-size:10px;line-height:10px;color:#444;font-weight:normal;font-style:normal;">value)</div>
<div class="a t" style="left:508px;top:544.24px;font-size:10px;line-height:10px;color:#444;font-weight:normal;font-style:normal;">Other synonyms:</div>
<div class="a t" style="left:508px;top:556.74px;font-size:10px;line-height:10px;color:#444;font-weight:normal;font-style:normal;">Intraabdominal</div>
<div class="a t" style="left:508px;top:581.74px;font-size:10px;line-height:10px;color:#444;font-weight:normal;font-style:normal;">This term can be navigated.</div>
<div class="a t" style="left:508px;top:594.24px;font-size:10px;line-height:10px;color:#444;font-weight:normal;font-style:normal;">This term can be selected.</div>
<div class="a t" style="left:508px;top:606.74px;font-size:10px;line-height:10px;color:#444;font-weight:normal;font-style:normal;">This term has NO children.</div>
</body></html>
